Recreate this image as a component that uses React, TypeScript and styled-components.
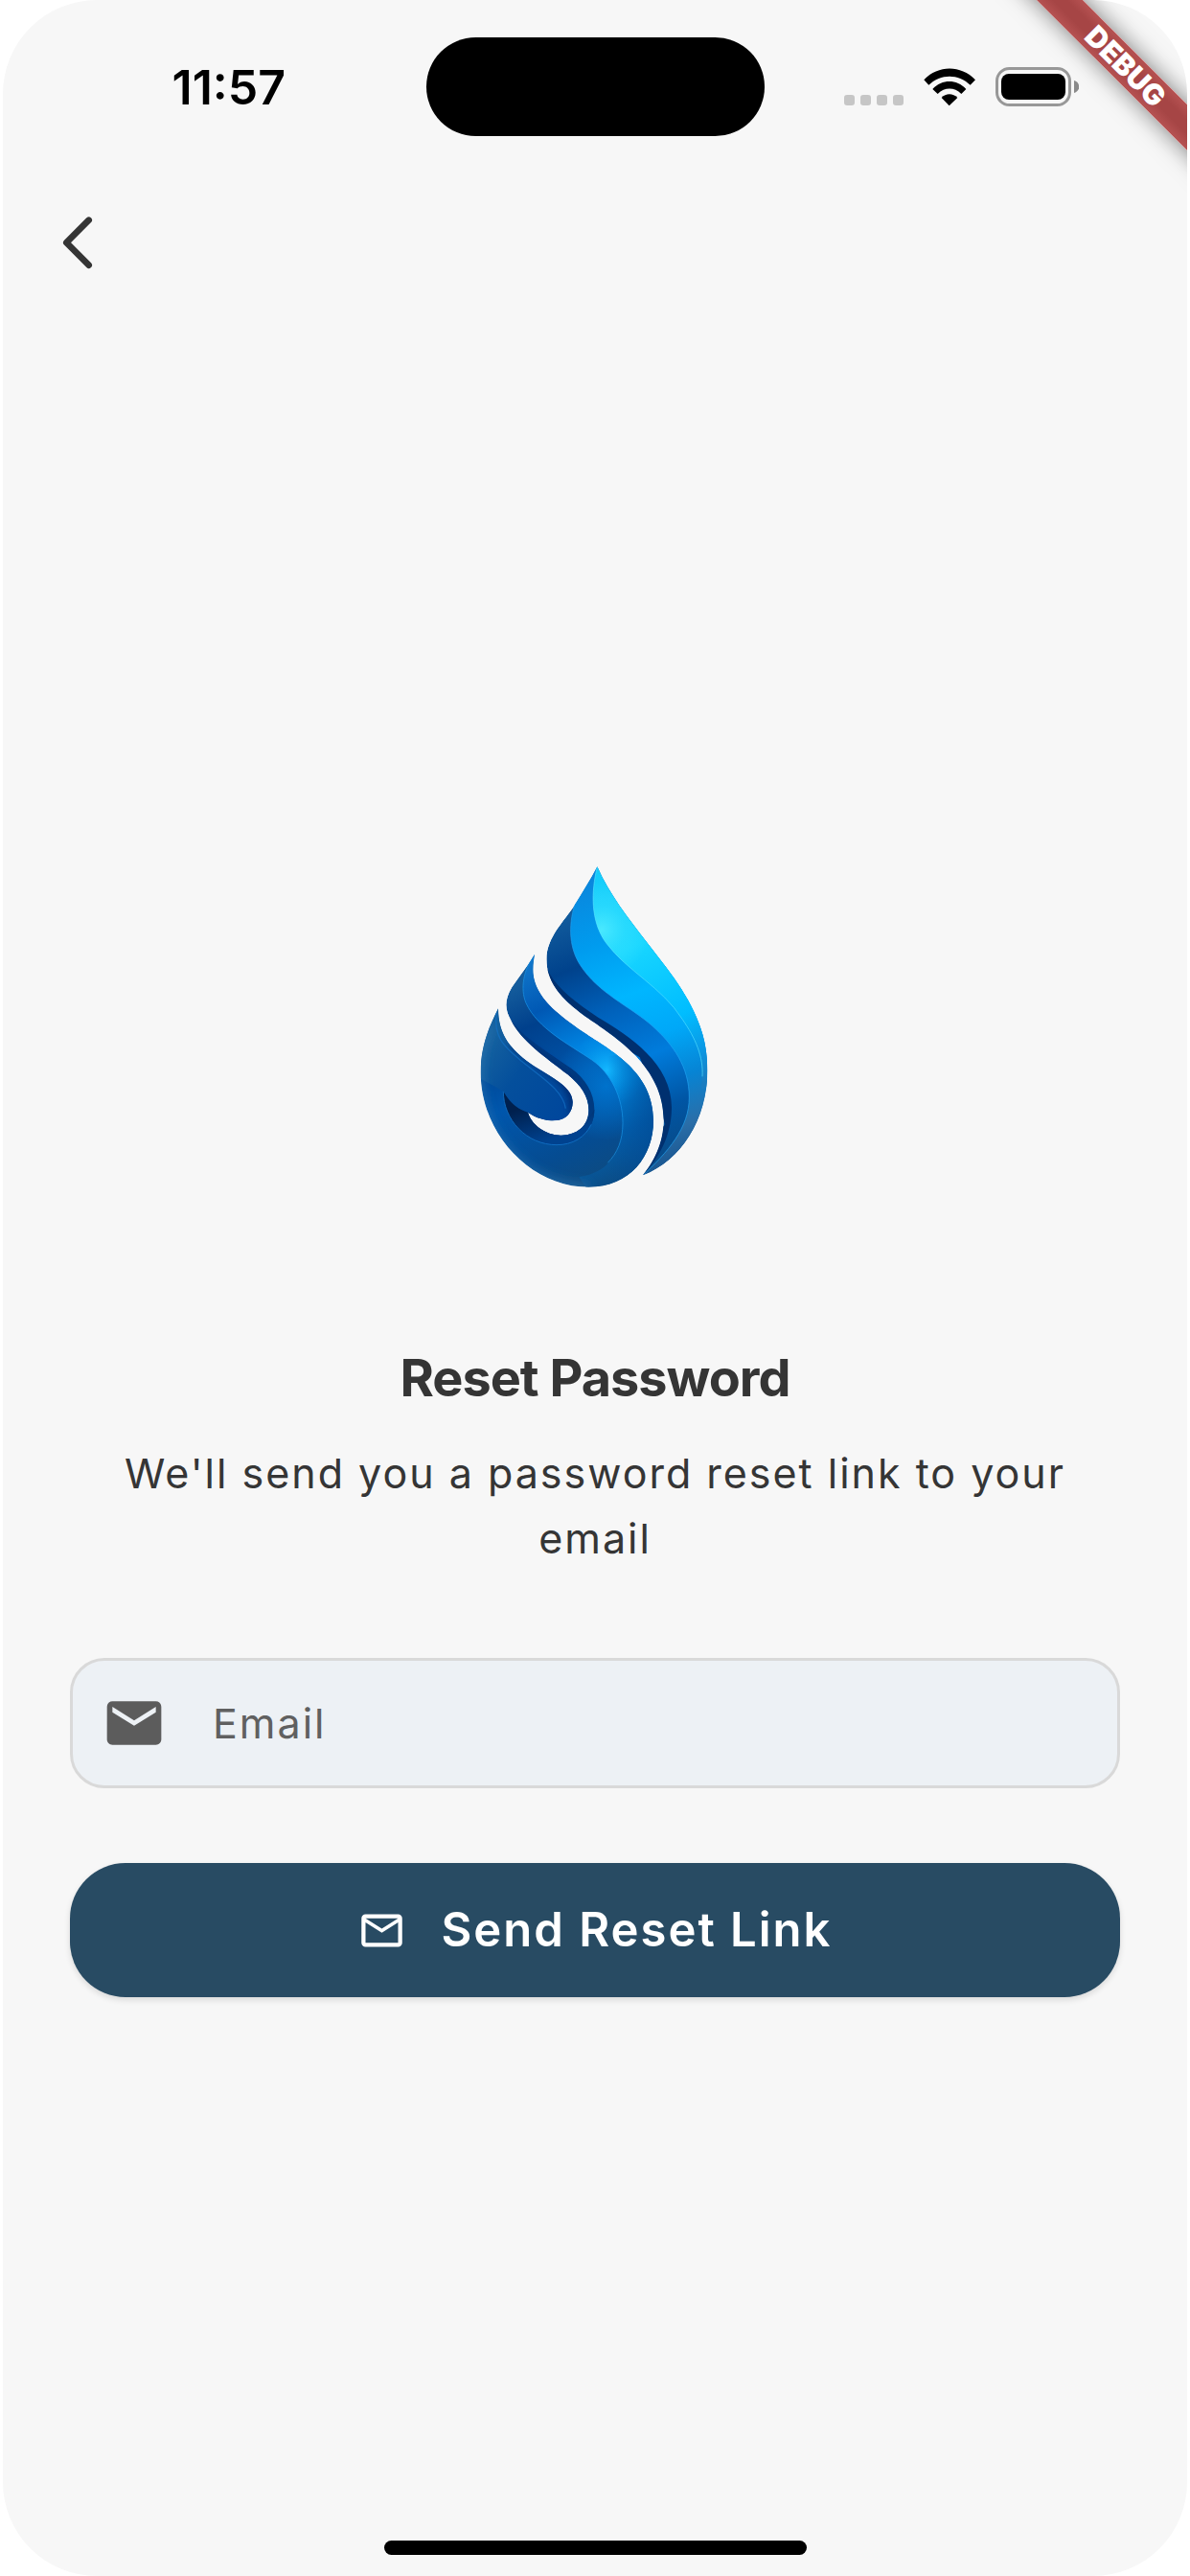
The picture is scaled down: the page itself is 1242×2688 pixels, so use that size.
import React from "react";
import styled, { createGlobalStyle } from "styled-components";
import { MdEmail, MdMailOutline } from "react-icons/md";

const GlobalStyle = createGlobalStyle`
  * { box-sizing: border-box; }
  body {
    margin: 0;
    background: #ffffff;
    font-family: Inter, "Noto Sans", sans-serif;
    color: #353535;
  }
`;

const Screen = styled.div`
  position: relative;
  display: flex;
  flex-direction: column;
  min-height: 100vh;
  margin: 0 3px;
  background: #f7f7f7;
  border-radius: 98px;
  overflow: hidden;
`;

const StatusBar = styled.header`
  display: grid;
  grid-template-columns: 1fr 353px 1fr;
  align-items: center;
  padding-top: 39px;
`;

const Clock = styled.time`
  padding-left: 30px;
  text-align: center;
  font-size: 50px;
  line-height: 60px;
  font-weight: 600;
  color: #000000;
`;

const Island = styled.div`
  height: 103px;
  border-radius: 52px;
  background: #000000;
`;

const Indicators = styled.div`
  display: flex;
  justify-content: center;
  align-items: flex-end;
  gap: 21px;
  padding-right: 30px;
`;

const SignalDots = styled.div`
  display: flex;
  gap: 6px;
  padding-bottom: 1px;
`;

const Dot = styled.span`
  width: 11px;
  height: 11px;
  border-radius: 3px;
  background: #c6c6c6;
`;

const RibbonCorner = styled.div`
  position: absolute;
  top: 0;
  right: 0;
  width: 240px;
  height: 240px;
  overflow: hidden;
  pointer-events: none;
`;

const Ribbon = styled.div`
  position: absolute;
  top: 52px;
  right: -86px;
  width: 300px;
  text-align: center;
  font-size: 30px;
  line-height: 34px;
  font-weight: 900;
  color: #ffffff;
  background: linear-gradient(#b65252, #a64545 35%, #a64545 65%, #b65252);
  box-shadow: 0 0 24px rgba(0, 0, 0, 0.5);
  transform: rotate(45deg);
`;

const AppBar = styled.nav`
  display: flex;
  align-items: center;
  height: 160px;
  margin-top: 31px;
  padding: 0 36px;
`;

const BackButton = styled.button`
  display: flex;
  align-items: center;
  justify-content: center;
  width: 84px;
  height: 84px;
  border: 0;
  background: none;
  color: #353535;
`;

const Main = styled.main`
  flex: 1;
  display: flex;
  flex-direction: column;
  justify-content: center;
  padding: 0 70px 10px;
`;

const LogoBox = styled.div`
  display: flex;
  justify-content: center;
  margin-bottom: 154px;
`;

const Title = styled.h1`
  margin: 0;
  text-align: center;
  font-size: 54px;
  line-height: 68px;
  font-weight: 700;
  letter-spacing: -1px;
`;

const Hint = styled.p`
  margin: 31px 0 91px;
  padding: 0 24px;
  text-align: center;
  font-size: 43px;
  line-height: 68px;
  letter-spacing: 2px;
`;

const Form = styled.form`
  display: flex;
  flex-direction: column;
  gap: 78px;
`;

const Field = styled.label`
  display: flex;
  align-items: center;
  gap: 48px;
  height: 136px;
  padding: 0 30px;
  border: 3px solid #d9d9d9;
  border-radius: 36px;
  background: #edf1f5;
  color: #5c5c5c;
`;

const EmailInput = styled.input`
  flex: 1;
  min-width: 0;
  padding: 0;
  border: 0;
  outline: 0;
  background: none;
  font: inherit;
  font-size: 43px;
  line-height: 68px;
  letter-spacing: 2px;
  color: #353535;
  &::placeholder {
    color: #606060;
    opacity: 1;
  }
`;

const SubmitButton = styled.button`
  display: flex;
  align-items: center;
  justify-content: center;
  gap: 36px;
  height: 140px;
  border: 0;
  border-radius: 58px;
  background: #284b63;
  box-shadow: 0 3px 6px rgba(0, 0, 0, 0.12);
  color: #ffffff;
  font-family: inherit;
  font-size: 49px;
  line-height: 68px;
  font-weight: 600;
  letter-spacing: 2px;
`;

const HomeArea = styled.footer`
  display: flex;
  justify-content: center;
  padding: 0 0 22px;
`;

const HomeIndicator = styled.div`
  width: 441px;
  height: 15px;
  border-radius: 8px;
  background: #000000;
`;

function WifiIcon() {
  return (
    <svg width="54" height="40" viewBox="368 210 162 120" aria-hidden="true">
      <path d="M369 247C414 200 484 200 530 247L514 263C477 227 421 227 384 263Z" />
      <path d="M396 276C426 244 471 244 501 276L486 291C464 269 434 269 412 291Z" />
      <path d="M448 328L424 303C437 288 460 288 474 303Z" />
    </svg>
  );
}

function BatteryIcon() {
  return (
    <svg width="87" height="41" viewBox="0 0 87 41" aria-hidden="true">
      <rect x="1.5" y="1.5" width="76" height="38" rx="13" fill="none" stroke="#989898" strokeWidth="3" />
      <rect x="6" y="7" width="67" height="27" rx="8" />
      <path d="M82 14C89 16 89 25 82 27Z" fill="#8a8a8a" />
    </svg>
  );
}

function BackIcon() {
  return (
    <svg width="32" height="56" viewBox="196 674 96 168" aria-hidden="true">
      <path
        d="M279 688L209 758.500L279 829"
        fill="none"
        stroke="currentColor"
        strokeWidth="20"
        strokeLinecap="round"
        strokeLinejoin="round"
      />
    </svg>
  );
}

const UPPER =
  "M427 43C405 85 380 125 355 165C325 212 268 265 268 333C268 420 340 475 390 512C485 577 635 670 635 835C635 910 603 968 570 1009C690 962 772 835 772 680C772 600 752 548 738 515C700 425 640 355 580 277C525 205 465 130 427 43Z";
const LOWER =
  "M231 317C205 360 180 390 160 420C135 462 138 492 158 526C190 590 265 640 335 694C375 727 400 762 400 805C400 855 362 884 315 884C262 884 220 848 210 812C235 830 265 838 293 838C330 838 350 812 350 780C350 725 265 695 205 650C150 607 118 565 117 487C85 550 62 610 62 688C62 880 220 1046 400 1046C530 1046 603 950 603 838C603 685 470 620 385 562C295 500 226 445 226 365C226 345 229 330 231 317Z";

function DropLogo() {
  return (
    <svg width="280" height="360" viewBox="0 0 840 1080" role="img" aria-label="Water drop logo">
      <defs>
        <clipPath id="upperClip"><path d={UPPER} /></clipPath>
        <clipPath id="lowerClip"><path d={LOWER} /></clipPath>
        <linearGradient id="upperDark" gradientUnits="userSpaceOnUse" x1="330" y1="170" x2="640" y2="960">
          <stop offset="0" stopColor="#145f9f" />
          <stop offset="0.22" stopColor="#00428c" />
          <stop offset="0.42" stopColor="#0062bc" />
          <stop offset="0.62" stopColor="#007cdc" />
          <stop offset="0.82" stopColor="#0055a4" />
          <stop offset="1" stopColor="#084a86" />
        </linearGradient>
        <linearGradient id="upperMid" gradientUnits="userSpaceOnUse" x1="400" y1="80" x2="690" y2="950">
          <stop offset="0" stopColor="#0a86dc" />
          <stop offset="0.22" stopColor="#009bee" />
          <stop offset="0.42" stopColor="#00b6ff" />
          <stop offset="0.58" stopColor="#00a8f8" />
          <stop offset="0.74" stopColor="#0784d4" />
          <stop offset="0.9" stopColor="#2a6ea8" />
          <stop offset="1" stopColor="#1c5a94" />
        </linearGradient>
        <linearGradient id="cyan" gradientUnits="userSpaceOnUse" x1="430" y1="60" x2="760" y2="720">
          <stop offset="0" stopColor="#16ccfa" />
          <stop offset="0.35" stopColor="#18d6ff" />
          <stop offset="0.7" stopColor="#00bdff" />
          <stop offset="0.86" stopColor="#0a9ae6" />
          <stop offset="1" stopColor="#1a7cc0" />
        </linearGradient>
        <radialGradient id="cyanGlow" gradientUnits="userSpaceOnUse" cx="440" cy="240" r="150">
          <stop offset="0" stopColor="#5ff2ff" stopOpacity="0.7" />
          <stop offset="0.5" stopColor="#4deaff" stopOpacity="0.3" />
          <stop offset="1" stopColor="#5ff2ff" stopOpacity="0" />
        </radialGradient>
        <linearGradient id="lowerBase" gradientUnits="userSpaceOnUse" x1="140" y1="430" x2="420" y2="1040">
          <stop offset="0" stopColor="#145c9c" />
          <stop offset="0.2" stopColor="#00408c" />
          <stop offset="0.5" stopColor="#0056ac" />
          <stop offset="0.8" stopColor="#054c92" />
          <stop offset="1" stopColor="#0e4b80" />
        </linearGradient>
        <radialGradient id="innerGlow" gradientUnits="userSpaceOnUse" cx="455" cy="730" r="170">
          <stop offset="0" stopColor="#0072cc" />
          <stop offset="1" stopColor="#0072cc" stopOpacity="0" />
        </radialGradient>
        <linearGradient id="band" gradientUnits="userSpaceOnUse" x1="210" y1="330" x2="510" y2="1020">
          <stop offset="0" stopColor="#1279cc" />
          <stop offset="0.22" stopColor="#0058b4" />
          <stop offset="0.42" stopColor="#0082e0" />
          <stop offset="0.62" stopColor="#008be4" />
          <stop offset="0.82" stopColor="#0360ae" />
          <stop offset="1" stopColor="#0b4d86" />
        </linearGradient>
        <radialGradient id="bandGlow" gradientUnits="userSpaceOnUse" cx="458" cy="680" r="120">
          <stop offset="0" stopColor="#14b8ff" />
          <stop offset="1" stopColor="#0098f0" stopOpacity="0" />
        </radialGradient>
        <linearGradient id="rim" gradientUnits="userSpaceOnUse" x1="420" y1="0" x2="610" y2="0">
          <stop offset="0.2" stopColor="#004c98" stopOpacity="0" />
          <stop offset="1" stopColor="#004c98" stopOpacity="0.75" />
        </linearGradient>
        <linearGradient id="leaf" gradientUnits="userSpaceOnUse" x1="70" y1="620" x2="330" y2="810">
          <stop offset="0" stopColor="#14609f" />
          <stop offset="0.4" stopColor="#044f9c" />
          <stop offset="1" stopColor="#00479c" />
        </linearGradient>
        <linearGradient id="pocket" gradientUnits="userSpaceOnUse" x1="190" y1="800" x2="225" y2="915">
          <stop offset="0" stopColor="#00204e" />
          <stop offset="1" stopColor="#00428f" />
        </linearGradient>
        <filter id="soft" x="-20%" y="-20%" width="140%" height="140%"><feGaussianBlur stdDeviation="9" /></filter>
        <filter id="wide" x="-30%" y="-30%" width="160%" height="160%"><feGaussianBlur stdDeviation="16" /></filter>
      </defs>

      <g clipPath="url(#upperClip)">
        <path d={UPPER} fill="url(#upperDark)" />
        <path
          d="M262 330C270 400 340 455 430 515C530 575 662 660 660 800C658 890 620 955 565 1015L500 1000L640 850L560 640L380 530L255 400Z"
          fill="#00306f"
        />
        <path
          d="M360 150C338 215 335 290 373 350C430 440 530 480 600 542C665 600 715 670 715 765C715 860 650 935 565 1014L800 980V100L430 20Z"
          fill="url(#upperMid)"
        />
        <path
          d="M360 150C338 215 335 290 373 350C430 440 530 480 600 542C665 600 715 670 715 765C715 860 650 935 565 1014"
          fill="none" stroke="#22a4f4" strokeWidth="3" strokeOpacity="0.65"
        />
        <path
          d="M427 43C408 120 405 215 455 282C520 370 630 420 693 520C735 580 765 640 752 740L800 720V300L440 30Z"
          fill="url(#cyan)"
        />
        <path
          d="M427 43C408 120 405 215 455 282C520 370 630 420 693 520L700 350L440 30Z"
          fill="url(#cyanGlow)"
        />
        <path
          d="M427 43C408 120 405 215 455 282C520 370 630 420 693 520C735 580 760 640 756 700"
          fill="none" stroke="#5ce6ff" strokeWidth="3" strokeOpacity="0.6"
        />
      </g>

      <g clipPath="url(#lowerClip)">
        <path d={LOWER} fill="url(#lowerBase)" />
        <path d={LOWER} fill="url(#innerGlow)" />
        <path
          d="M235 310C196 365 185 425 204 470C240 550 340 600 410 648C470 690 507 765 507 845C507 940 455 1004 370 1014L400 1060H640V500L300 300Z"
          fill="url(#band)"
        />
        <path
          d="M204 470C240 550 340 600 410 648C470 690 507 765 507 845C507 940 455 1004 370 1014L400 1060H640V500L300 400Z"
          fill="url(#bandGlow)"
        />
        <path
          d="M410 648C470 690 507 765 507 845C507 940 455 1004 370 1014L400 1060H640V600Z"
          fill="url(#rim)"
        />
        <path
          d="M231 317C196 365 185 425 204 470C240 550 340 600 410 648C470 690 507 765 507 845C507 900 490 940 460 970"
          fill="none" stroke="#1c9cf0" strokeWidth="3" strokeOpacity="0.6"
        />
        <path
          d="M150 515C200 583 270 622 345 674C388 705 418 750 418 803C418 868 366 914 300 914C205 914 133 835 133 746L220 800L330 860L380 800L330 700L170 570Z"
          fill="#003a80"
        />
        <path
          d="M133 746C133 835 205 914 300 914C366 914 418 868 418 803L380 860L310 884L210 812C170 800 150 775 133 746Z"
          fill="url(#pocket)"
        />
        <path
          d="M133 746C133 835 205 914 300 914C350 914 390 890 408 850"
          fill="none" stroke="#1477cc" strokeWidth="3" strokeOpacity="0.8"
        />
        <path
          d="M117 480L50 600V700L133 746C160 790 180 800 210 812C250 840 300 845 330 830L365 780L330 690L180 580Z"
          fill="url(#leaf)"
        />
        <path
          d="M150 600C190 640 240 665 290 705C325 735 345 770 338 820L380 790L350 700L200 590Z"
          fill="#002f74" filter="url(#soft)"
        />
        <path
          d="M112 500C100 580 140 610 190 652C260 708 320 745 328 800"
          fill="none" stroke="#1470c4" strokeWidth="4" strokeOpacity="0.7"
        />
        <path
          d="M90 540C40 620 40 760 90 860C150 970 250 1050 400 1054"
          fill="none" stroke="#2f78b0" strokeWidth="30" strokeOpacity="0.7" filter="url(#wide)"
        />
      </g>
    </svg>
  );
}

export default function App() {
  return (
    <>
      <GlobalStyle />
      <Screen>
        <StatusBar>
          <Clock>11:57</Clock>
          <Island />
          <Indicators>
            <SignalDots>
              <Dot />
              <Dot />
              <Dot />
              <Dot />
            </SignalDots>
            <WifiIcon />
            <BatteryIcon />
          </Indicators>
        </StatusBar>
        <AppBar>
          <BackButton type="button" aria-label="Back">
            <BackIcon />
          </BackButton>
        </AppBar>
        <Main>
          <LogoBox>
            <DropLogo />
          </LogoBox>
          <Title>Reset Password</Title>
          <Hint>We'll send you a password reset link to your email</Hint>
          <Form onSubmit={(event) => event.preventDefault()}>
            <Field>
              <MdEmail size={68} aria-hidden="true" />
              <EmailInput type="email" placeholder="Email" aria-label="Email" />
            </Field>
            <SubmitButton type="submit">
              <MdMailOutline size={51} aria-hidden="true" />
              Send Reset Link
            </SubmitButton>
          </Form>
        </Main>
        <HomeArea>
          <HomeIndicator />
        </HomeArea>
        <RibbonCorner>
          <Ribbon>DEBUG</Ribbon>
        </RibbonCorner>
      </Screen>
    </>
  );
}
